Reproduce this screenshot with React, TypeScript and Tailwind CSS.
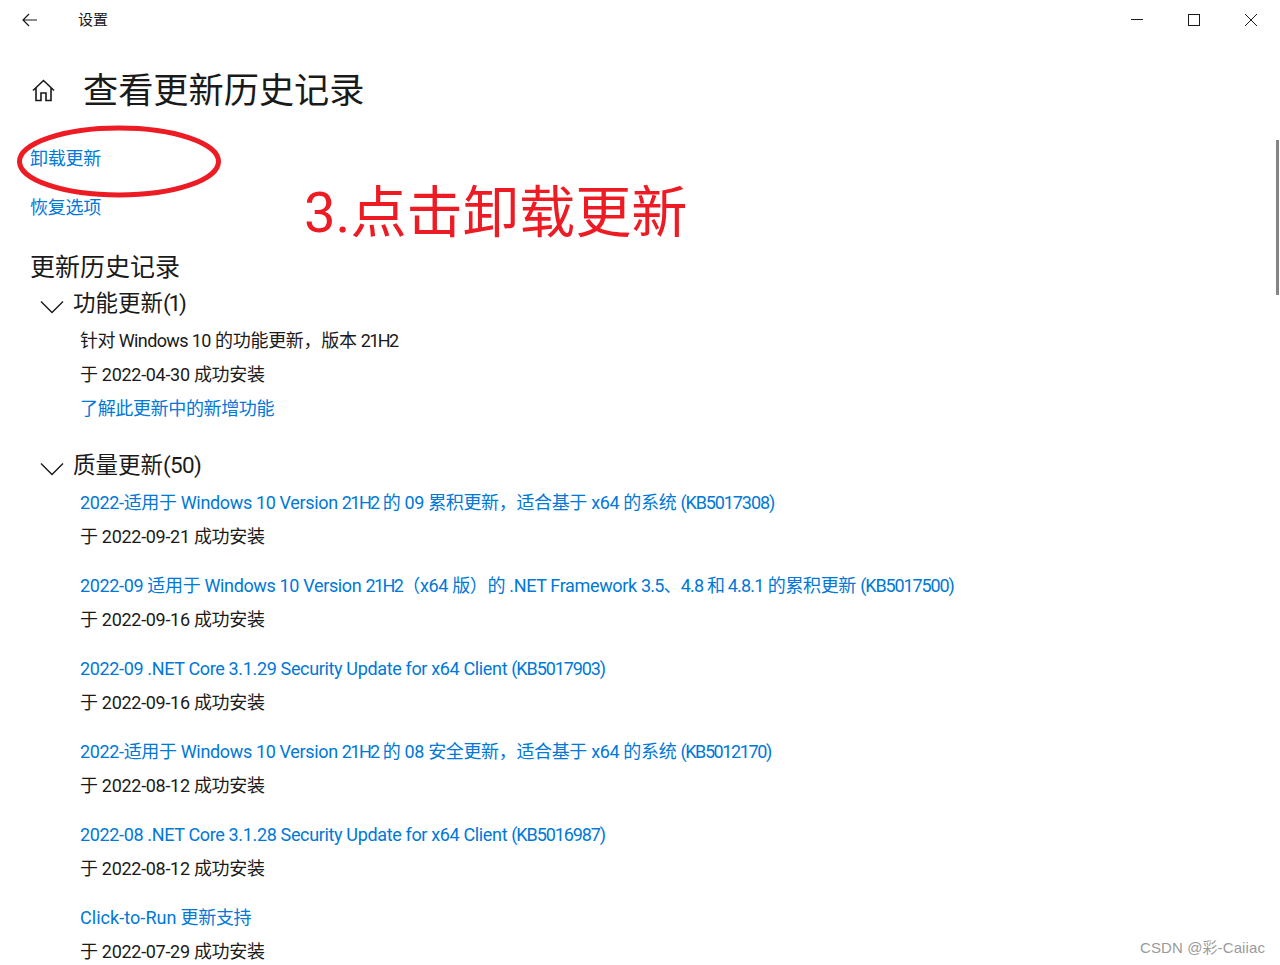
import React from "react";

const font = { fontFamily: 'Roboto, "Noto Sans CJK SC", sans-serif' };

interface Update {
    title: string;
    date: string;
}

const qualityUpdates: Update[] = [
    { title: "2022-适用于 Windows 10 Version 21H2 的 09 累积更新，适合基于 x64 的系统 (KB5017308)", date: "于 2022-09-21 成功安装" },
    { title: "2022-09 适用于 Windows 10 Version 21H2（x64 版）的 .NET Framework 3.5、4.8 和 4.8.1 的累积更新 (KB5017500)", date: "于 2022-09-16 成功安装" },
    { title: "2022-09 .NET Core 3.1.29 Security Update for x64 Client (KB5017903)", date: "于 2022-09-16 成功安装" },
    { title: "2022-适用于 Windows 10 Version 21H2 的 08 安全更新，适合基于 x64 的系统 (KB5012170)", date: "于 2022-08-12 成功安装" },
    { title: "2022-08 .NET Core 3.1.28 Security Update for x64 Client (KB5016987)", date: "于 2022-08-12 成功安装" },
    { title: "Click-to-Run 更新支持", date: "于 2022-07-29 成功安装" },
];

const fitText = (text: string) =>
    text.split(/(21H2|\(KB\d+\)|Click-to-Run|针对 Windows 10|3\.5、4\.8 和 4\.8\.1)/).map((part, i) => {
        if (i % 2 === 0) return part;
        if (part === "Click-to-Run") return <span key={i} className="tracking-[0.05px]">{part}</span>;
        if (part === "(KB5012170)") return <span key={i} className="tracking-[-1.4px]">{part}</span>;
        if (part === "21H2") return <span key={i} className="tracking-[-1.6px]">{part}</span>;
        if (part.startsWith("针对")) return <span key={i} className="tracking-[-0.6px]">{part}</span>;
        if (part.startsWith("3.5")) return <span key={i} className="tracking-[-0.8px]">{part}</span>;
        return <span key={i} className="tracking-[-1.1px]">{part}</span>;
    });

const Chevron = () => (
    <svg width="24" height="14" viewBox="0 0 24 14" fill="none" stroke="#1a1a1a" strokeWidth="1.4" className="shrink-0">
        <path d="M1 1.5 L12 12.5 L23 1.5" />
    </svg>
);

const Group = ({ title, count, countClass }: { title: string; count: string; countClass: string }) => (
    <div className="flex h-10 items-center pl-[10px]">
        <div className="mt-[8px] w-[33px]">
            <Chevron />
        </div>
        <span className="pt-[2px] text-[22.5px] text-[#1a1a1a]">
            {title}
            <span className={countClass}>{count}</span>
        </span>
    </div>
);

const Row = ({ children, link }: { children: string; link?: boolean }) => (
    <div className={`h-[34px] whitespace-nowrap pl-[50px] pt-[1px] text-[18px] leading-[34px] ${link ? "tracking-[-0.35px] text-[#0078d7]" : "tracking-[-0.3px] text-[#1a1a1a]"}`}>
        {fitText(children)}
    </div>
);

export default function App() {
    return (
        <div className="relative h-[965px] w-[1280px] overflow-hidden bg-white" style={font}>
            {/* title bar */}
            <div className="flex h-10 items-center justify-between">
                <div className="flex items-center">
                    <svg width="16" height="14" viewBox="0 0 16 14" fill="none" stroke="#1a1a1a" strokeWidth="1.2" className="ml-[22px]">
                        <path d="M15 7 H1 M7 1 L1 7 L7 13" />
                    </svg>
                    <span className="ml-[40px] text-[15px] text-[#1a1a1a]">设置</span>
                </div>
                <div className="flex items-center gap-[45px] pr-[23px]">
                    <svg width="12" height="12" viewBox="0 0 12 12" stroke="#1a1a1a" strokeWidth="1">
                        <path d="M0 5.5 H12" />
                    </svg>
                    <svg width="12" height="12" viewBox="0 0 12 12" fill="none" stroke="#1a1a1a" strokeWidth="1">
                        <rect x="0.5" y="0.5" width="11" height="11" />
                    </svg>
                    <svg width="12" height="12" viewBox="0 0 12 12" stroke="#1a1a1a" strokeWidth="1">
                        <path d="M0 0 L12 12 M12 0 L0 12" />
                    </svg>
                </div>
            </div>

            {/* page title */}
            <div className="mt-[25px] flex h-[50px] items-center pl-[32px]">
                <svg width="23" height="23" viewBox="0 0 23 23" fill="none" stroke="#1a1a1a" strokeWidth="1.6">
                    <path d="M1 11.5 L11.5 1.5 L22 11.5 M4 9 V21.5 H9 V14 H14 V21.5 H19 V9" />
                </svg>
                <h1 className="ml-[28px] pt-[2px] text-[35.2px] font-normal text-[#1a1a1a]">查看更新历史记录</h1>
            </div>

            {/* links */}
            <div className="mt-[26px] flex flex-col gap-[15px] pl-[30px] text-[18px] tracking-[-0.25px] text-[#0078d7]">
                <div className="flex h-[34px] items-center">卸载更新</div>
                <div className="flex h-[34px] items-center">恢复选项</div>
            </div>

            {/* history */}
            <div className="mt-[27px] flex h-8 items-center pl-[30px] pt-[2px] text-[25px] text-[#1a1a1a]">更新历史记录</div>
            <div className="pl-[30px]">
                <Group title="功能更新" count="(1)" countClass="tracking-[-2.2px]" />
                <Row>针对 Windows 10 的功能更新，版本 21H2</Row>
                <Row>于 2022-04-30 成功安装</Row>
                <Row link>了解此更新中的新增功能</Row>
                <div className="mt-5">
                    <Group title="质量更新" count="(50)" countClass="tracking-[-0.7px]" />
                </div>
                <div className="flex flex-col gap-[15px]">
                    {qualityUpdates.map((u) => (
                        <div key={u.title}>
                            <Row link>{u.title}</Row>
                            <Row>{u.date}</Row>
                        </div>
                    ))}
                </div>
            </div>

            {/* annotation drawn over the screenshot */}
            <svg width="210" height="80" viewBox="0 0 210 80" fill="none" className="absolute left-[14px] top-[122px]">
                <ellipse cx="105" cy="39.5" rx="99.5" ry="33.5" stroke="#ed1c24" strokeWidth="5" />
            </svg>
            <div className="absolute left-[304px] top-[173px] whitespace-nowrap text-[56.2px] leading-[80px] text-[#ed1c24]">3.点击卸载更新</div>

            {/* scrollbar */}
            <div className="absolute right-[1px] top-[140px] h-[155px] w-[3px] bg-[#858585]" />

            {/* watermark */}
            <div className="absolute right-[15px] top-[937px] text-[15px] tracking-[0.1px] text-[#9a9a9a]" style={{ fontFamily: '"Liberation Sans", "Noto Sans CJK SC", sans-serif' }}>CSDN @彩-Caiiac</div>
        </div>
    );
}
